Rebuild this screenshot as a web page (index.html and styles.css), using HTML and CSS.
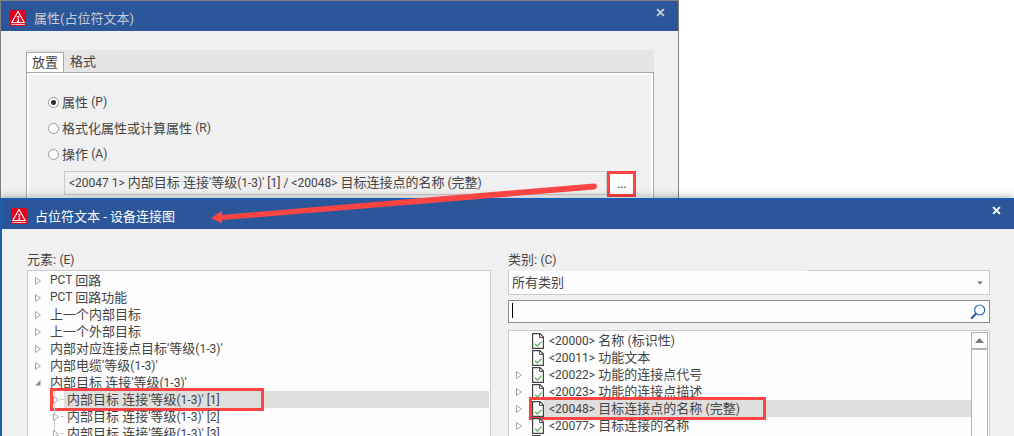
FILE: index.html
```html
<!DOCTYPE html>
<html lang="zh-CN">
<head>
  <meta charset="utf-8">
  <title>属性(占位符文本)</title>
  <link rel="stylesheet" href="styles.css">
</head>
<body>
  <svg class="defs" width="0" height="0" aria-hidden="true">
    <symbol id="logo" viewBox="0 0 16 16">
      <rect width="16" height="16" rx="1.5" fill="#e2001a"/>
      <path d="M8 1.6L14.2 12.5H1.8z" fill="none" stroke="#fff" stroke-width="1.1"/>
      <path d="M6.6 6.6L9.3 6.6L7.4 8.8L9 9.2L8 11.8M7 10.4L8 12L9.200 10.800" fill="none" stroke="#fff" stroke-width="0.9"/>
      <path d="M1.2 14.4H14.8" stroke="#fff" stroke-width="0.8"/>
    </symbol>
    <symbol id="close" viewBox="0 0 8 8">
      <path d="M1 1L7 7M7 1L1 7" stroke="currentColor" stroke-width="1.8"/>
    </symbol>
    <symbol id="closed" viewBox="0 0 8 10">
      <path d="M1.5 1.5V8.5L6.5 5z" fill="#fff" stroke="#a6a6a6"/>
    </symbol>
    <symbol id="opened" viewBox="0 0 8 10">
      <path d="M6.5 2V7.5H1z" fill="#8c8c8c"/>
    </symbol>
    <symbol id="page" viewBox="0 0 12 16">
      <path d="M0.6 0.6H8L11.4 4V15.4H0.6z" fill="#fff" stroke="#444" stroke-width="1.2"/>
      <path d="M7.6 0.6V4.4H11.4" fill="none" stroke="#444"/>
      <path d="M3 10.8L5.4 13L9.6 8.6" fill="none" stroke="#5cb85c" stroke-width="1.3"/>
    </symbol>
  </svg>

  <section class="dialog back">
    <header class="titlebar">
      <svg class="logo"><use href="#logo"/></svg>
      <h1>属性(占位符文本)</h1>
      <button class="close" aria-label="关闭"><svg><use href="#close"/></svg></button>
    </header>
    <div class="tabs">
      <button class="tab active">放置</button>
      <button class="tab">格式</button>
    </div>
    <div class="panel">
      <label class="option"><input type="radio" name="kind" checked>属性 <span class="code">(P)</span></label>
      <label class="option"><input type="radio" name="kind">格式化属性或计算属性 <span class="code">(R)</span></label>
      <label class="option"><input type="radio" name="kind">操作 <span class="code">(A)</span></label>
      <div class="picker">
        <output class="value"><span class="code">&lt;20047 1&gt; </span>内部目标 连接<span class="code">'</span>等级<span class="code">(1-3)' [1] / &lt;20048&gt; </span>目标连接点的名称<span class="code"> (</span>完整<span class="code">)</span></output>
        <button class="more" aria-label="选择属性">...</button>
      </div>
    </div>
  </section>

  <section class="dialog front">
    <header class="titlebar">
      <svg class="logo"><use href="#logo"/></svg>
      <h1>占位符文本 - 设备连接图</h1>
      <button class="close" aria-label="关闭"><svg><use href="#close"/></svg></button>
    </header>
    <div class="columns">
      <div class="column elements">
        <div class="caption">元素: <span class="code">(E)</span></div>
        <ul class="list tree">
          <li><svg class="arrow"><use href="#closed"/></svg><span class="code">PCT </span>回路</li>
          <li><svg class="arrow"><use href="#closed"/></svg><span class="code">PCT </span>回路功能</li>
          <li><svg class="arrow"><use href="#closed"/></svg>上一个内部目标</li>
          <li><svg class="arrow"><use href="#closed"/></svg>上一个外部目标</li>
          <li><svg class="arrow"><use href="#closed"/></svg><span>内部对应连接点目标'等级<span class="code">(1-3)</span>'</span></li>
          <li><svg class="arrow"><use href="#closed"/></svg><span>内部电缆'等级<span class="code">(1-3)</span>'</span></li>
          <li><svg class="arrow"><use href="#opened"/></svg><span>内部目标 连接'等级<span class="code">(1-3)</span>'</span></li>
          <li class="child"><svg class="arrow"><use href="#closed"/></svg><span class="name selected">内部目标 连接'等级<span class="code">(1-3)' [1]</span></span><i class="mark"></i></li>
          <li class="child"><svg class="arrow"><use href="#closed"/></svg><span class="name">内部目标 连接'等级<span class="code">(1-3)' [2]</span></span></li>
          <li class="child"><svg class="arrow"><use href="#closed"/></svg><span class="name">内部目标 连接'等级<span class="code">(1-3)' [3]</span></span></li>
        </ul>
      </div>
      <div class="column categories">
        <label class="caption" for="category">类别: <span class="code">(C)</span></label>
        <div class="combo">
          <select id="category"><option>所有类别</option></select>
          <svg class="caret" viewBox="0 0 6 4"><path d="M0 0.5H6L3 3.5z" fill="#777"/></svg>
        </div>
        <div class="search">
          <input type="text" aria-label="搜索">
          <svg viewBox="0 0 16 16"><circle cx="9.7" cy="6" r="5" fill="#fff" stroke="#2b6cc4" stroke-width="1.2"/><path d="M6.2 9.5L1.2 14.8" stroke="#2b579a" stroke-width="2"/></svg>
        </div>
        <div class="list results">
          <ul>
            <li><svg class="arrow"></svg><svg class="page"><use href="#page"/></svg><span class="name"><span class="code">&lt;20000&gt;</span> 名称 <span class="code">(</span>标识性<span class="code">)</span></span></li>
            <li><svg class="arrow"></svg><svg class="page"><use href="#page"/></svg><span class="name"><span class="code">&lt;20011&gt;</span> 功能文本</span></li>
            <li><svg class="arrow"><use href="#closed"/></svg><svg class="page"><use href="#page"/></svg><span class="name"><span class="code">&lt;20022&gt;</span> 功能的连接点代号</span></li>
            <li><svg class="arrow"><use href="#closed"/></svg><svg class="page"><use href="#page"/></svg><span class="name"><span class="code">&lt;20023&gt;</span> 功能的连接点描述</span></li>
            <li><svg class="arrow"><use href="#closed"/></svg><svg class="page"><use href="#page"/></svg><span class="name selected"><span class="code">&lt;20048&gt;</span> 目标连接点的名称 <span class="code">(</span>完整<span class="code">)</span></span><i class="mark"></i></li>
            <li><svg class="arrow"><use href="#closed"/></svg><svg class="page"><use href="#page"/></svg><span class="name"><span class="code">&lt;20077&gt;</span> 目标连接的名称</span></li>
            <li><svg class="arrow"></svg><svg class="page"><use href="#page"/></svg></li>
          </ul>
          <div class="scrollbar">
            <button aria-label="向上滚动"><svg viewBox="0 0 9 5"><path d="M0 5L4.5 0L9 5z" fill="#777"/></svg></button>
          </div>
        </div>
      </div>
    </div>
  </section>

  <!-- red pointer from the "..." button to the dialog it opens -->
  <svg class="pointer" width="390" height="44" viewBox="0 0 390 44" aria-hidden="true">
    <path d="M0 36L11 29V33L383 1.5Q386 1.5 386 4T383 7.5L11 38V41.500z" fill="#ff4444"/>
  </svg>
</body>
</html>
```
FILE: styles.css
```css
html, body {
  margin: 0;
  padding: 0;
}
body {
  display: flex;
  flex-direction: column;
  height: 100vh;
  overflow: hidden;
  background: #fff;
  color: #444;
  font-family: Roboto, "Noto Sans CJK SC", sans-serif;
  font-size: 13px;
  line-height: 17px;
}
* {
  box-sizing: border-box;
}
button, input, select {
  font: inherit;
  color: inherit;
}
button {
  border: 0;
  padding: 0;
  background: none;
}
ul {
  list-style: none;
  margin: 0;
  padding: 0;
}
.defs {
  position: absolute;
}
.code {
  font-size: 12px;
  white-space: pre;
}

/* windows */
.dialog {
  background: #f0f0f0;
}
.back {
  width: 67%;
  border: 1px solid #808080;
  border-bottom: 0;
}
.front {
  display: flex;
  flex-direction: column;
  flex: 1;
  min-height: 0;
  position: relative;
  border-top: 1px solid #0c63c4;
  border-left: 2px solid #1c5fae;
  box-shadow: 0 0 8px rgba(0, 0, 0, 0.4);
}
.titlebar {
  display: flex;
  align-items: center;
  height: 30px;
  padding: 4px 13px 0 9px;
  background: #2b579a;
  color: #fff;
}
.back .titlebar {
  color: #c8ccd2;
}
.logo {
  width: 16px;
  height: 16px;
}
.titlebar h1 {
  flex: 1;
  margin: 0 0 0 8px;
  font-size: 13px;
  font-weight: normal;
}
.close {
  display: flex;
  align-self: flex-start;
  padding: 3px 0;
}
.close svg {
  width: 9px;
  height: 9px;
}

/* tabs */
.tabs {
  display: flex;
  align-items: flex-end;
  height: 22px;
  margin: 19px 24px 0 25px;
  background: #e5e5e5;
}
.tab {
  height: 22px;
  padding: 0 6px;
}
.tab.active {
  height: 20px;
  padding: 0 5px;
  background: #fff;
  border: 1px solid #a9a9a9;
  border-bottom: 0;
}
.panel {
  margin: 0 24px 0 25px;
  padding: 16px 16px 1px 19px;
  border: 1px solid #a9a9a9;
  border-bottom: 0;
  box-shadow: inset 0 0 0 2px #fff;
}
.option {
  display: flex;
  align-items: center;
  height: 26px;
  white-space: pre;
}
.option input {
  appearance: none;
  width: 11px;
  height: 11px;
  margin: 0 3px 0 2px;
  border: 1px solid #999;
  border-radius: 50%;
  background: #fff;
}
.option input:checked {
  background: radial-gradient(#333 0 2px, #fff 3px);
}
.picker {
  display: flex;
  height: 26px;
  margin: 4px 1px 0 18px;
}
.value {
  flex: 1;
  height: 24px;
  padding: 1px 4px;
  border: 1px solid #ccc;
  line-height: 20px;
  white-space: nowrap;
  overflow: hidden;
}
.more {
  width: 29px;
  border: 3px solid #ff4444;
  background: #fff;
  color: #222;
  font-size: 12px;
  line-height: 16px;
}

/* front dialog */
.columns {
  display: flex;
  flex: 1;
  gap: 17px;
  min-height: 0;
  padding: 22px 24px 0 25px;
}
.column {
  display: flex;
  flex-direction: column;
  min-width: 0;
}
.elements {
  flex: 464 1 0;
}
.categories {
  flex: 482 1 0;
}
.caption {
  height: 19px;
}
.list {
  flex: 1;
  min-height: 0;
  overflow: hidden;
  background: #fdfdfd;
  border: 1px solid #ccc;
  border-bottom: 0;
  padding: 1px 1px 0 0;
}
.list li {
  display: flex;
  align-items: center;
  position: relative;
  height: 17px;
  padding-left: 6px;
  white-space: pre;
}
.arrow {
  flex: none;
  width: 8px;
  height: 10px;
  margin-right: 8px;
}
.name {
  flex: 1;
  height: 17px;
  padding-left: 3px;
}
.selected {
  background: #dedede;
}
.tree .child {
  padding-left: 24px;
  background: linear-gradient(#ccc, #ccc) 26px 0 / 1px 100% no-repeat;
}
.child .arrow {
  position: relative;
  margin-right: 4px;
}
.child::before {
  content: "";
  position: absolute;
  left: 32px;
  top: 8px;
  width: 4px;
  border-top: 1px solid #ccc;
}
.mark {
  position: absolute;
  top: -3px;
  left: 22px;
  width: 214px;
  height: 23px;
  border: 3px solid #ff4444;
}
.results .mark {
  left: 20px;
  width: 237px;
}

.combo {
  position: relative;
  height: 25px;
}
.combo select {
  appearance: none;
  display: block;
  width: 100%;
  height: 25px;
  padding: 0 3px;
  border: 1px solid #ccc;
  border-top-color: #f0f0f0;
  border-radius: 0;
  background: #fdfdfd;
}
.combo::after {
  content: "";
  position: absolute;
  top: 0;
  right: 0;
  width: 38%;
  border-top: 1px solid #ccc;
}
.caret {
  position: absolute;
  top: 11px;
  right: 7px;
  width: 6px;
  height: 4px;
}
.search {
  display: flex;
  align-items: center;
  position: relative;
  height: 23px;
  margin: 5px 0 7px;
  padding-right: 3px;
  border: 1px solid #8c8c8c;
  background: #fdfdfd;
}
.search input {
  flex: 1;
  min-width: 0;
  border: 0;
  padding: 0 3px;
  background: none;
  outline: 0;
}
.search svg {
  width: 16px;
  height: 16px;
}
/* text cursor */
.search::before {
  content: "";
  position: absolute;
  left: 3px;
  top: 2px;
  width: 1px;
  height: 15px;
  background: #000;
}
.results {
  display: flex;
}
.results ul {
  flex: 1;
}
.results .arrow {
  margin-right: 9px;
}
.results .name {
  padding-left: 5px;
}
.page {
  flex: none;
  width: 12px;
  height: 16px;
}
.scrollbar {
  width: 17px;
  border: 1px solid #b4b4b4;
  border-bottom: 0;
}
.scrollbar button {
  display: flex;
  align-items: center;
  justify-content: center;
  width: 100%;
  height: 17px;
  border-bottom: 2px solid #b4b4b4;
}
.scrollbar svg {
  width: 9px;
  height: 5px;
}

.pointer {
  position: absolute;
  left: 211px;
  top: 182px;
}
```
